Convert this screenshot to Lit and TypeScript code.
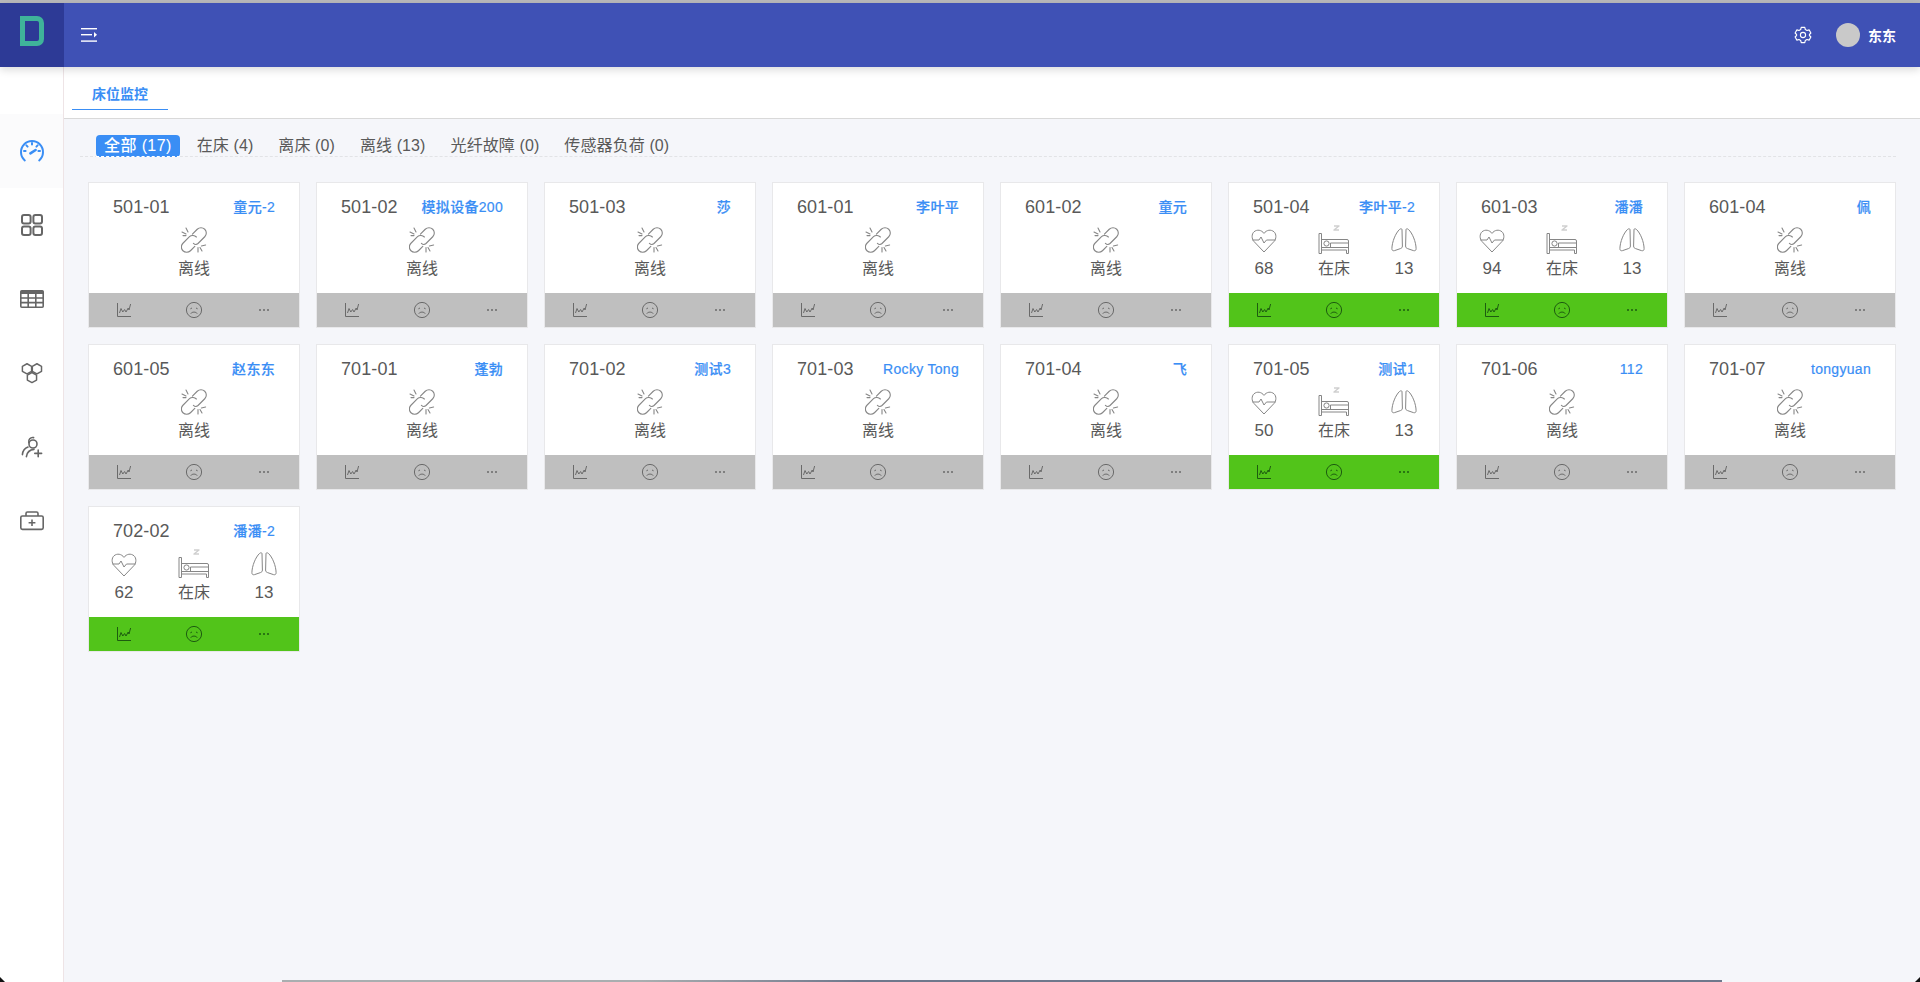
import { LitElement, html, css, svg } from "lit";
import { customElement } from "lit/decorators.js";

type Bed = { id: string; name: string; hr?: number; rr?: number };

const beds: Bed[] = [
  { id: "501-01", name: "童元-2" },
  { id: "501-02", name: "模拟设备200" },
  { id: "501-03", name: "莎" },
  { id: "601-01", name: "李叶平" },
  { id: "601-02", name: "童元" },
  { id: "501-04", name: "李叶平-2", hr: 68, rr: 13 },
  { id: "601-03", name: "潘潘", hr: 94, rr: 13 },
  { id: "601-04", name: "佩" },
  { id: "601-05", name: "赵东东" },
  { id: "701-01", name: "蓬勃" },
  { id: "701-02", name: "测试3" },
  { id: "701-03", name: "Rocky Tong" },
  { id: "701-04", name: "飞" },
  { id: "701-05", name: "测试1", hr: 50, rr: 13 },
  { id: "701-06", name: "112" },
  { id: "701-07", name: "tongyuan" },
  { id: "702-02", name: "潘潘-2", hr: 62, rr: 13 },
];

const filters = ["全部 (17)", "在床 (4)", "离床 (0)", "离线 (13)", "光纤故障 (0)", "传感器负荷 (0)"];

const ic = (w: number, h: number, body: unknown, cls = "") =>
  html`<svg class=${cls} width=${w} height=${h} viewBox="0 0 ${w} ${h}" fill="none" stroke="currentColor">${body}</svg>`;

const linkIcon = ic(26, 26, svg`
  <g stroke-width="1.1" stroke-linecap="round">
    <path d="M11.4 7.1 L16.25 2.25 A5.3 5.3 0 0 1 23.75 9.75 L17 16.5 C15.6 17.8 13.8 17.6 12.4 16.4"/>
    <path d="M15.4 10 C13.8 8.5 10.6 7.6 8.5 9.7 L1.95 16.25 A5.3 5.3 0 0 0 9.45 23.75 L13.8 19.4"/>
    <path d="M5 1 L7 5 M1 5 L5 7 M2 8.6 L5 8.6"/>
    <path d="M17 20.5 L17 25 M19 20.5 L21 24 M20.4 19 L24.6 18"/>
  </g>`);

const heartIcon = ic(26, 26, svg`
  <g stroke-width="1" stroke-linejoin="round">
    <path d="M13 25 L3 14.5 C0.5 11.8 0.5 7 3 4.8 C6 2.2 10.5 2.8 13 6.4 C15.5 2.8 20 2.2 23 4.8 C25.5 7 25.5 11.8 23 14.5 Z"/>
    <path d="M1.4 13 L8 13 L10 10 L13 16 L15.5 13 L24.6 13"/>
  </g>`);

const bedIcon = ic(32, 30, svg`
  <g stroke-width="1" stroke-linejoin="round">
    <path d="M1 8.5 L3.5 8.5 L3.5 28.5 L1 28.5 Z"/>
    <path d="M3.5 14.5 L29 14.5 Q30.5 14.5 30.5 16 L30.5 28.5 L28.5 28.5 L28.5 25 L3.5 25"/>
    <path d="M3.5 22.5 L30.5 22.5"/>
    <circle cx="8.5" cy="18.5" r="2.6"/>
    <path d="M12.5 22.5 L12.5 18 L30.5 18"/>
    <path d="M16 1 L21 1 L16 5 L21 5" stroke="#cfcfcf" stroke-width="1.4"/>
  </g>`);

const lungIcon = ic(26, 24, svg`
  <g stroke-width="1" stroke-linejoin="round">
    <path d="M11 1.6 C11 0.6 9.6 0.5 8.6 1.4 C4.6 5 1 14 0.9 20.6 C0.9 22.6 2 23 3.6 22.6 L9.4 20.6 C10.6 20.2 11.4 19.6 11.4 18 Z"/>
    <path d="M15 1.6 C15 0.6 16.4 0.5 17.4 1.4 C21.4 5 25 14 25.1 20.6 C25.1 22.6 24 23 22.4 22.6 L16.6 20.6 C15.4 20.2 14.6 19.6 14.6 18 Z"/>
  </g>`);

const chartIcon = ic(16, 16, svg`
  <g stroke-width="1">
    <path d="M1.5 1 L1.5 14.5 L15 14.5"/>
    <path d="M3.5 11 L5 6.5 L6.8 10 L8.6 7.5 L10 10 L12.2 6 L13 8 L14.6 2"/>
  </g>`);

const faceIcon = ic(18, 18, svg`
  <g stroke-width="1">
    <circle cx="9" cy="9" r="7.6"/>
    <path d="M5.8 12.6 C7 10.6 11 10.6 12.2 12.6" />
    <path d="M5.4 7.8 L7 7 M11 7 L12.6 7.8"/>
  </g>`);

const dotsIcon = ic(12, 4, svg`
  <circle cx="2" cy="2" r="1" fill="currentColor" stroke="none"/>
  <circle cx="6" cy="2" r="1" fill="currentColor" stroke="none"/>
  <circle cx="10" cy="2" r="1" fill="currentColor" stroke="none"/>`);

const navIcons = [
  ic(26, 26, svg`
    <g stroke-width="2" stroke-linecap="round">
      <path d="M5.8 22.4 A11 11 0 1 1 20.2 22.4"/>
      <path d="M13 5 L13 6.6 M5 13 L6.6 13 M21 13 L19.4 13 M7.4 7.4 L8.6 8.6 M18.6 7.4 L17.4 8.6"/>
      <path d="M11.4 15.4 L16.6 12" stroke-width="2.6"/>
    </g>`),
  ic(26, 26, svg`
    <g stroke-width="2">
      <rect x="3" y="3" width="8.6" height="8.6" rx="2"/>
      <rect x="14.4" y="3" width="8.6" height="8.6" rx="2"/>
      <rect x="3" y="14.4" width="8.6" height="8.6" rx="2"/>
      <rect x="14.4" y="14.4" width="8.6" height="8.6" rx="2"/>
    </g>`),
  ic(26, 26, svg`
    <g stroke-width="1.6">
      <rect x="1.8" y="4.8" width="22.4" height="16.4" rx="1"/>
      <path d="M1.8 6.4 L24.2 6.4" stroke-width="3.2"/>
      <path d="M1.8 12 L24.2 12 M1.8 16.6 L24.2 16.6 M9.2 8 L9.2 21 M16.8 8 L16.8 21"/>
    </g>`),
  ic(26, 26, svg`
    <g stroke-width="1.6" stroke-linejoin="round" transform="translate(1 1) scale(.92)">
      <path d="M13 12.5 L18 15.25 L18 20.75 L13 23.5 L8 20.75 L8 15.25 Z"/>
      <path d="M7.6 3 L12.6 5.75 L12.6 11.25 L7.6 14 L2.6 11.25 L2.6 5.75 Z"/>
      <path d="M18.4 3 L23.4 5.75 L23.4 11.25 L18.4 14 L13.4 11.25 L13.4 5.75 Z"/>
    </g>`),
  ic(26, 26, svg`
    <g stroke-width="1.6" stroke-linecap="round">
      <circle cx="14" cy="10" r="4"/>
      <path d="M9.8 8.6 A4 4 0 0 1 14.6 3.6"/>
      <path d="M3.4 20.6 C3.8 16.6 5.8 14 9 13"/>
      <path d="M7.4 22.6 C8 18.6 10.6 15.8 15 15.4"/>
      <path d="M15.8 19.4 L22.6 19.4 M19.2 16 L19.2 22.8"/>
    </g>`),
  ic(26, 26, svg`
    <g stroke-width="1.6" stroke-linejoin="round">
      <rect x="1.8" y="8" width="22.4" height="13.4" rx="1.6"/>
      <path d="M7 8 L7 5.4 C7 4.6 7.6 4 8.4 4 L17.6 4 C18.4 4 19 4.6 19 5.4 L19 8"/>
      <path d="M13 11.4 L13 18 M9.6 14.8 L16.4 14.8"/>
    </g>`),
];

@customElement("app-root")
export class AppRoot extends LitElement {
  static styles = css`
    :host {
      display: flex;
      flex-direction: column;
      position: relative;
      width: 1920px;
      height: 982px;
      overflow: hidden;
      background: #f5f6fa;
      color: #595959;
      font-family: "Liberation Sans", "Noto Sans CJK SC", sans-serif;
    }
    .strip { height: 3px; flex: none; background: #b9b9bb; }
    .header {
      position: relative;
      z-index: 2;
      flex: none;
      height: 64px;
      display: flex;
      align-items: center;
      background: #3f51b5;
      color: #fff;
      box-shadow: 0 3px 8px rgba(0, 0, 0, 0.14);
    }
    .logo {
      width: 64px;
      height: 100%;
      box-sizing: border-box;
      padding-bottom: 8px;
      display: flex;
      align-items: center;
      justify-content: center;
      background: #2d3a96;
    }
    .menu { margin-left: 17px; display: flex; }
    .spacer { flex: 1; }
    .gear { display: flex; margin-right: 24px; }
    .avatar { width: 24px; height: 24px; border-radius: 50%; background: #c9c9c9; margin-right: 8px; }
    .user { font-size: 14px; font-weight: 700; margin-right: 24px; }
    .main { flex: 1; display: flex; min-height: 0; }
    .side {
      width: 63px;
      flex: none;
      background: #fff;
      border-right: 1px solid #eee4e6;
      padding-top: 47px;
      color: #666;
    }
    .nav { height: 74px; display: flex; align-items: center; justify-content: center; }
    .nav.on { background: #fbfbfc; color: #3a8ef5; }
    .body { flex: 1; min-width: 0; display: flex; flex-direction: column; }
    .tabs {
      height: 52px;
      flex: none;
      box-sizing: border-box;
      background: #fff;
      border-bottom: 1px solid #d9d9d9;
      padding-left: 8px;
    }
    .tab {
      width: 96px;
      height: 43px;
      box-sizing: border-box;
      padding-top: 17px;
      display: block;
      text-align: center;
      font-size: 14px;
      line-height: 20px;
      font-weight: 700;
      color: #3a8ef5;
      border-bottom: 1px solid #3a8ef5;
    }
    .filters {
      position: relative;
      margin: 16px 24px 0 16px;
      padding-left: 16px;
      height: 21px;
      display: flex;
      gap: 9px;
      border-bottom: 1px dashed #e2e3e6;
      font-size: 16px;
      line-height: 22px;
    }
    .filter { padding: 0 8px; white-space: nowrap; letter-spacing: 0.1px; }
    .filter.on {
      background: #3a8ef5;
      color: #fff;
      border-radius: 4px;
      font-weight: 500;
      letter-spacing: 0.4px;
      height: 22px;
      box-sizing: border-box;
    }
    .filter.on::after {
      content: "";
      position: absolute;
      left: 16px;
      width: 84px;
      top: 21px;
      border-bottom: 1px dashed #fff;
    }
    .grid {
      margin: 25px 0 0 24px;
      display: grid;
      grid-template-columns: repeat(8, 212px);
      grid-auto-rows: 146px;
      gap: 16px;
    }
    .card {
      box-sizing: border-box;
      display: flex;
      flex-direction: column;
      background: #fff;
      border: 1px solid #e8e8ea;
    }
    .head {
      height: 42px;
      flex: none;
      box-sizing: border-box;
      padding: 13px 24px 0;
      display: flex;
      justify-content: space-between;
      align-items: flex-start;
      line-height: 22px;
    }
    .id { font-size: 18px; letter-spacing: 0.1px; }
    .name {
      font-size: 14px;
      color: #3a8ef5;
      font-weight: 500;
      letter-spacing: 0.3px;
      -webkit-text-stroke: 0.2px #3a8ef5;
      white-space: nowrap;
    }
    .stats { flex: 1; display: grid; grid-template-columns: repeat(3, 1fr); color: #868686; }
    .stats.off { grid-template-columns: 1fr; }
    .stat { display: flex; flex-direction: column; align-items: center; }
    .gl { height: 30px; display: flex; align-items: center; justify-content: center; }
    .val { font-size: 16px; line-height: 28px; color: #595959; }
    .val.num { font-size: 17px; }
    .foot {
      height: 34px;
      flex: none;
      display: grid;
      grid-template-columns: repeat(3, 1fr);
      background: #bfbfbf;
      color: #6a6a6a;
    }
    .foot.ok { background: #52c41a; color: #1d5c10; }
    .foot span { display: flex; align-items: center; justify-content: center; }
    .bar {
      position: absolute;
      left: 282px;
      width: 1440px;
      bottom: 0;
      height: 2px;
      background: linear-gradient(90deg, #a9aeb0, #a9aeb0 25%, #6f788c 40%, #6f788c);
    }
    .corner { position: absolute; bottom: 0; width: 5px; height: 5px; background: #111; }
    .corner.l { left: 0; clip-path: polygon(0 0, 100% 100%, 0 100%); }
    .corner.r { right: 0; clip-path: polygon(100% 0, 100% 100%, 0 100%); }
  `;

  private card(b: Bed) {
    const on = b.hr !== undefined;
    return html`<div class="card">
      <div class="head"><span class="id">${b.id}</span><span class="name">${b.name}</span></div>
      ${on
        ? html`<div class="stats">
            <div class="stat"><div class="gl">${heartIcon}</div><div class="val num">${b.hr}</div></div>
            <div class="stat"><div class="gl">${bedIcon}</div><div class="val">在床</div></div>
            <div class="stat"><div class="gl">${lungIcon}</div><div class="val num">${b.rr}</div></div>
          </div>`
        : html`<div class="stats off">
            <div class="stat"><div class="gl">${linkIcon}</div><div class="val">离线</div></div>
          </div>`}
      <div class="foot ${on ? "ok" : ""}">
        <span>${chartIcon}</span><span>${faceIcon}</span><span>${dotsIcon}</span>
      </div>
    </div>`;
  }

  render() {
    return html`
      <div class="strip"></div>
      <header class="header">
        <div class="logo">
          <svg width="24" height="30" viewBox="0 0 24 30" fill="none">
            <path d="M2.5 2.5 L17 2.5 C19.6 2.5 21.5 4.4 21.5 7 L21.5 23 C21.5 25.6 19.6 27.5 17 27.5 L2.5 27.5 Z" stroke="#3fb39a" stroke-width="5"/>
          </svg>
        </div>
        <div class="menu">
          <svg width="16" height="14" viewBox="0 0 16 14" fill="#fff">
            <rect y="0" width="16" height="1.4"/>
            <rect y="6" width="11" height="1.4"/>
            <rect y="12.4" width="16" height="1.4"/>
            <path d="M13 4 L16 6.8 L13 9.6 Z"/>
          </svg>
        </div>
        <div class="spacer"></div>
        <div class="gear">
          <svg width="18" height="18" viewBox="0 0 18 18" fill="none" stroke="#fff" stroke-width="1.1" stroke-linejoin="round">
            <path d="M7.2 1.4 L10.8 1.4 L11.3 3.5 L13 4.5 L15.1 3.9 L16.9 7 L15.4 8.5 L15.4 9.5 L16.9 11 L15.1 14.1 L13 13.5 L11.3 14.5 L10.8 16.6 L7.2 16.6 L6.7 14.5 L5 13.5 L2.9 14.1 L1.1 11 L2.6 9.5 L2.6 8.5 L1.1 7 L2.9 3.9 L5 4.5 L6.7 3.5 Z"/>
            <circle cx="9" cy="9" r="2.6"/>
          </svg>
        </div>
        <div class="avatar"></div>
        <div class="user">东东</div>
      </header>
      <div class="main">
        <nav class="side">
          ${navIcons.map((i, n) => html`<div class="nav ${n === 0 ? "on" : ""}">${i}</div>`)}
        </nav>
        <section class="body">
          <div class="tabs"><span class="tab">床位监控</span></div>
          <div class="filters">
            ${filters.map((f, n) => html`<span class="filter ${n === 0 ? "on" : ""}">${f}</span>`)}
          </div>
          <div class="grid">${beds.map((b) => this.card(b))}</div>
        </section>
      </div>
      <div class="corner l"></div>
      <div class="corner r"></div>
      <div class="bar"></div>
    `;
  }
}
